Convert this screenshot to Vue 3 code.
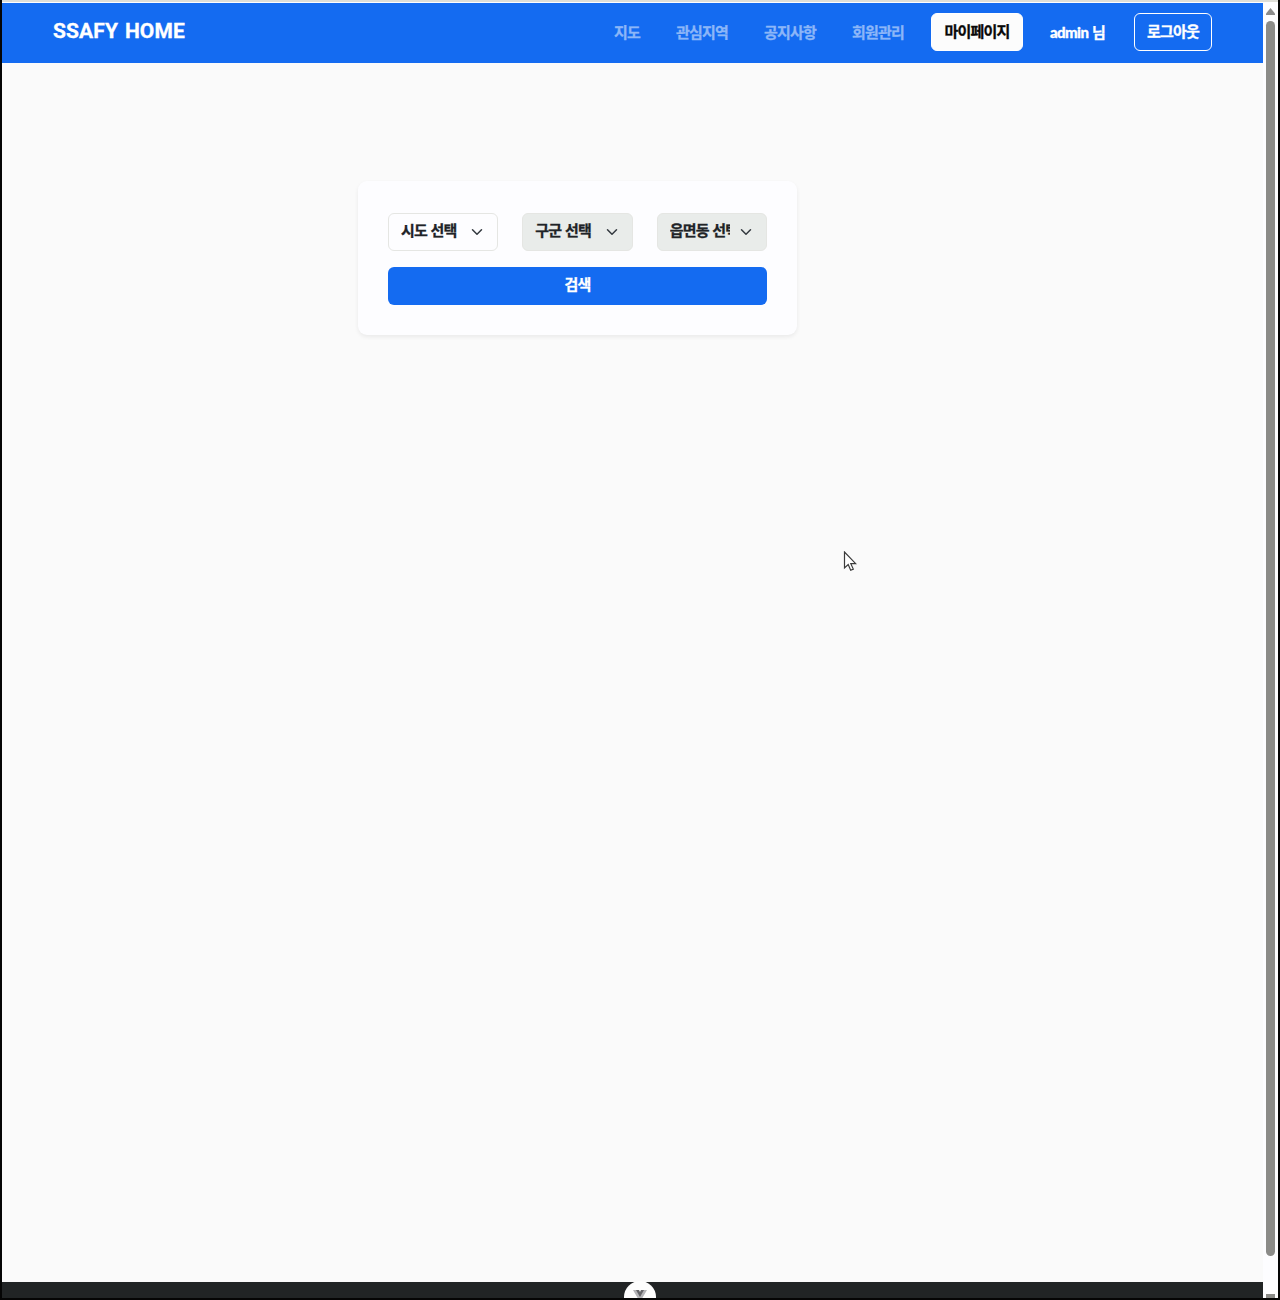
<script setup>
const links = ['지도', '관심지역', '공지사항', '회원관리']
const selects = [
  { label: '시도 선택', disabled: false },
  { label: '구군 선택', disabled: true },
  { label: '읍면동 선택', disabled: true },
]
</script>

<template>
  <div class="window">
    <div class="page">
      <header class="navbar">
        <a class="brand">SSAFY HOME</a>
        <nav class="links">
          <a v-for="link in links" :key="link">{{ link }}</a>
        </nav>
        <button class="btn mypage">마이페이지</button>
        <span class="user"><b>admin</b> 님</span>
        <button class="btn logout">로그아웃</button>
      </header>
      <main class="content">
        <section class="search">
          <div class="selects">
            <div v-for="s in selects" :key="s.label" class="select" :class="{ disabled: s.disabled }">
              <span>{{ s.label }}</span>
              <svg width="12" height="12" viewBox="0 0 16 16"><path d="m2 5 6 6 6-6" fill="none" stroke="#343a40" stroke-width="2" stroke-linecap="round" stroke-linejoin="round" /></svg>
            </div>
          </div>
          <button class="submit">검색</button>
        </section>
      </main>
      <footer class="footer">
        <div class="badge">
          <svg width="14" height="12" viewBox="0 0 14 12"><path d="M0 0h4l3 5 3-5h4L7 12z" fill="#b5b5b8" /><path d="M3 0h3l1 2 1-2h3L7 7z" fill="#66666a" /></svg>
        </div>
      </footer>
    </div>
    <aside class="scrollbar">
      <svg width="9" height="7" viewBox="0 0 9 7"><path d="M4.5 0 9 5.5V7H0V5.5z" fill="#8b8b8b" /></svg>
      <div class="thumb"></div>
      <div class="down"></div>
    </aside>
    <svg class="cursor" width="14" height="21" viewBox="0 0 14 21"><path d="M1.5 1v16l3.7-3.4 2.5 5.6 2.6-1.1-2.5-5.4h4.9z" fill="#fff" stroke="#3b3b3b" stroke-width="1.2" /></svg>
  </div>
</template>

<style>
body { margin: 0; background: #000; }
</style>

<style scoped>
* { box-sizing: border-box; }
.window {
  position: relative;
  display: flex;
  width: 1280px;
  height: 1300px;
  overflow: hidden;
  border: solid #050505;
  border-width: 0 2px 2px;
  background: linear-gradient(#deded8 0 2px, #fdfdff 2px);
  font: 700 15px/20px "Noto Sans CJK KR", sans-serif;
  letter-spacing: -0.8px;
  -webkit-text-stroke: 0.3px currentColor;
}
.page { display: flex; flex-direction: column; width: 1261px; flex: none; padding-top: 3px; }
.navbar {
  display: flex;
  align-items: center;
  height: 60px;
  flex: none;
  padding: 0 51px 2px;
  background: #146bf1;
  color: #fff;
  white-space: nowrap;
}
.brand { font: 700 21px/28px Roboto, sans-serif; letter-spacing: 0.1px; word-spacing: 1.6px; margin-right: auto; padding-bottom: 2px; }
.links { display: flex; gap: 36px; margin-right: 27px; color: #8cb6f8; }
button { font: inherit; letter-spacing: inherit; padding: 0; -webkit-text-stroke: inherit; }
.btn { height: 38px; border: 1px solid #fff; border-radius: 6px; padding-bottom: 2px; }
.mypage { width: 92px; margin-right: 27px; background: #fcfcfc; color: #080808; }
.user { width: 57px; margin-right: 27px; }
.user b { font: 900 15px/20px Lato, sans-serif; letter-spacing: -0.6px; margin-right: 1px; }
.logout { width: 78px; background: transparent; color: #fff; }
.content { flex: 1; background: #fafafa; padding: 118px 0 0 356px; }
.search {
  width: 439px;
  height: 154px;
  padding: 32px 30px 30px;
  border-radius: 9px;
  background: #fdfdff;
  box-shadow: 0 2px 4px rgba(0, 0, 0, 0.065);
}
.selects { display: flex; gap: 24px; margin-bottom: 16px; }
.select {
  display: flex;
  align-items: center;
  flex: 1;
  min-width: 0;
  height: 38px;
  padding: 0 14px 4px 12px;
  border: 1px solid #e5e6e3;
  border-radius: 6px;
  color: #202327;
}
.select span { flex: 1; min-width: 0; overflow: hidden; white-space: nowrap; margin-right: 10px; word-spacing: 1px; }
.select svg { flex: none; margin-top: 3px; }
.disabled { background: #e9ecea; }
.submit {
  display: block;
  width: 100%;
  height: 38px;
  padding-bottom: 4px;
  border: 0;
  border-radius: 6px;
  background: #146bf1;
  color: #fff;
}
.footer { height: 16px; flex: none; background: #212425; display: flex; justify-content: center; align-items: flex-start; }
.badge {
  position: relative;
  top: -1px;
  left: 7px;
  width: 32px;
  height: 32px;
  border-radius: 50%;
  background: #fdfdfd;
  display: flex;
  justify-content: center;
  padding-top: 9px;
}
.scrollbar { flex: 1; display: flex; flex-direction: column; align-items: center; padding: 8px 0 0; }
.scrollbar svg { flex: none; }
.thumb { width: 9px; height: 1235px; flex: none; margin-top: 6px; border-radius: 5px; background: #8b8b88; }
.down { width: 9px; height: 4px; flex: none; margin-top: 38px; background: #8b8b88; }
.cursor { position: absolute; left: 841px; top: 551px; }
</style>
